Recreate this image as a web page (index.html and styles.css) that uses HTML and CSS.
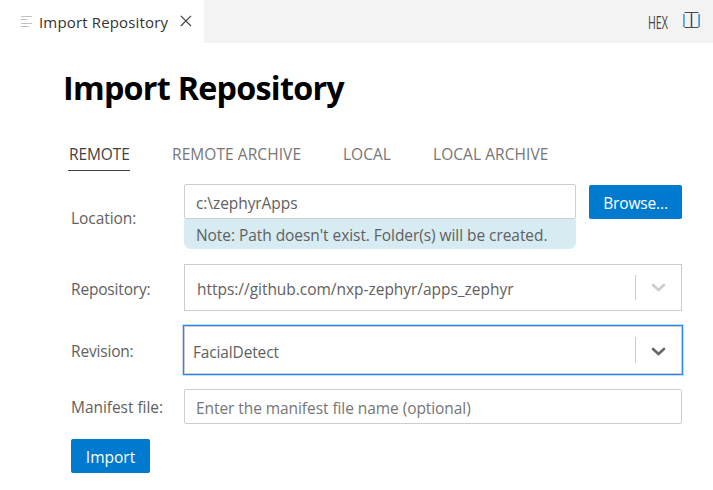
FILE: index.html
```html
<!DOCTYPE html>
<html lang="en">
<head>
<meta charset="utf-8">
<title>Import Repository</title>
<link rel="stylesheet" href="styles.css">
</head>
<body>
<header class="tabbar">
  <div class="editor-tab">
    <svg class="tab-icon" width="12" height="13" viewBox="0 0 12 13"><path d="M1 1.500h11M1 4.500h6M1 8.500h11M1 11.500h8" stroke="#c0c0c0"/></svg>
    <span class="tab-label">Import Repository</span>
    <svg class="tab-close" width="12" height="12" viewBox="0 0 12 12"><path d="M.8.8l10.200 10.200M11 .8L.8 11" stroke="#424242" stroke-width="1.200" fill="none"/></svg>
  </div>
  <div class="actions">
    <span class="hex">HEX</span>
    <svg class="split" width="17" height="17" viewBox="0 0 17 17" fill="none"><path d="M.5 2v13" stroke="#c98c4a"/><path d="M1.500 2v13M15.500 2v13" stroke="#6cb0ea"/><path d="M7.500 2v13" stroke="#ead9b8"/><path d="M9.500 2v13" stroke="#bcdcf5"/><path d="M16.500 2v13" stroke="#c47a2c"/><path d="M1.500.5h14M1.500 15.500h14M8.500 1v15" stroke="#4a4a4a" stroke-width="1.200"/></svg>
  </div>
</header>
<main class="page">
  <h1 class="title">Import Repository</h1>
  <nav class="tabs">
    <a class="tab active">REMOTE</a>
    <a class="tab archive">REMOTE ARCHIVE</a>
    <a class="tab local">LOCAL</a>
    <a class="tab local-archive">LOCAL ARCHIVE</a>
  </nav>
  <form class="form">
    <div class="row location">
      <label class="label">Location:</label>
      <div class="path">
        <div class="input">c:\zephyrApps</div>
        <div class="note">Note: Path doesn't exist. Folder(s) will be created.</div>
      </div>
      <button type="button" class="button browse">Browse...</button>
    </div>
    <div class="row repository">
      <label class="label">Repository:</label>
      <div class="select"><span class="value">https://github.com/nxp-zephyr/apps_zephyr</span><i class="sep"></i>
        <svg class="chev" width="16" height="10" viewBox="0 0 16 10"><path d="M2 2l5.500 5L13 2" fill="none" stroke="#ccc" stroke-width="2.600" stroke-linecap="round"/></svg></div>
    </div>
    <div class="row revision">
      <label class="label">Revision:</label>
      <div class="select focused"><span class="value">FacialDetect</span><i class="sep"></i>
        <svg class="chev" width="16" height="10" viewBox="0 0 16 10"><path d="M2 2l5.500 5L13 2" fill="none" stroke="#666" stroke-width="2.600" stroke-linecap="round"/></svg></div>
    </div>
    <div class="row manifest">
      <label class="label">Manifest file:</label>
      <div class="input wide"><span class="placeholder">Enter the manifest file name (optional)</span></div>
    </div>
    <button type="button" class="button import">Import</button>
  </form>
</main>
</body>
</html>
```
FILE: styles.css
```css
* { box-sizing: border-box; }
body { margin: 0; background: #fff; color: #616161; font: 15.5px/20px "Open Sans", "Noto Sans", sans-serif; white-space: nowrap; }
svg { display: block; flex: none; }
.tabbar { display: flex; justify-content: space-between; height: 43px; background: #f3f3f3; }
.editor-tab { display: flex; align-items: center; width: 204px; padding-left: 20px; background: #fff; }
.tab-icon { margin-top: -1px; }
.tab-label { margin-left: 7px; width: 129px; color: #333; font-size: 15px; letter-spacing: .16px; }
.tab-close { margin: -2px 0 0 12px; }
.actions { display: flex; align-items: center; padding: 0 13px 3px 0; }
.hex { width: 20px; margin: 4px 15px 0 0; color: #424242; font-size: 18px; transform: scaleX(.59); transform-origin: left; }
.page { padding: 21px 31px 0 62px; }
.title { margin: 0; padding-left: 1px; color: #000; font-size: 32.3px; line-height: 46px; font-weight: 700; letter-spacing: -.75px; }
.tabs { display: flex; margin: 28px 0 0 6px; height: 33px; }
.tab { padding: 6px 0 0 1px; color: #767676; letter-spacing: .07px; }
.active { width: 62px; border-bottom: 1px solid #424242; color: #424242; letter-spacing: -.1px; }
.archive { margin-left: 41px; width: 130px; }
.local { margin-left: 41px; width: 48px; letter-spacing: 0; }
.local-archive { margin-left: 42px; }
.form { margin: 13px 0 0 9px; }
.row { display: flex; align-items: center; }
.label { flex: none; width: 113px; letter-spacing: -.05px; }
.location { height: 65px; align-items: flex-start; }
.location .label { padding-top: 24px; }
.path { width: 392px; }
.input { display: flex; align-items: center; height: 35px; padding: 2px 0 0 11px; border: 1px solid #cecece; border-radius: 2px; letter-spacing: -.07px; }
.note { height: 30px; padding: 6px 0 0 12px; border-radius: 0 0 7px 7px; background: #d6ebf2; letter-spacing: -.06px; }
.button { height: 34px; padding: 2px 0 0; border: 0; border-radius: 2px; background: #007acf; color: #fff; font: inherit; font-weight: 500; }
.browse { width: 93px; margin: 1px 0 0 13px; letter-spacing: -.15px; }
.repository { height: 47px; margin-top: 15px; }
.repository .label, .revision .label { padding-top: 2px; letter-spacing: -.18px; }
.select { display: flex; align-items: center; flex: 1; height: 100%; border: 1px solid #ccc; padding-left: 12px; }
.value { flex: 1; padding-top: 3px; letter-spacing: -.03px; }
.sep { width: 1px; height: 25px; background: #ccc; }
.chev { margin: 1px 14px 0 15px; }
.revision { height: 48px; margin-top: 15px; }
.focused { padding-left: 8px; box-shadow: 0 0 0 1px #2684ff, 0 0 0 2px #c5deff; }
.focused .value { padding-top: 4px; letter-spacing: -.15px; }
.focused .sep { height: 26px; }
.focused .chev { margin-top: 3px; }
.manifest { margin-top: 15px; }
.wide { flex: 1; }
.placeholder { color: #767676; }
.import { width: 79px; margin-top: 15px; }
```
